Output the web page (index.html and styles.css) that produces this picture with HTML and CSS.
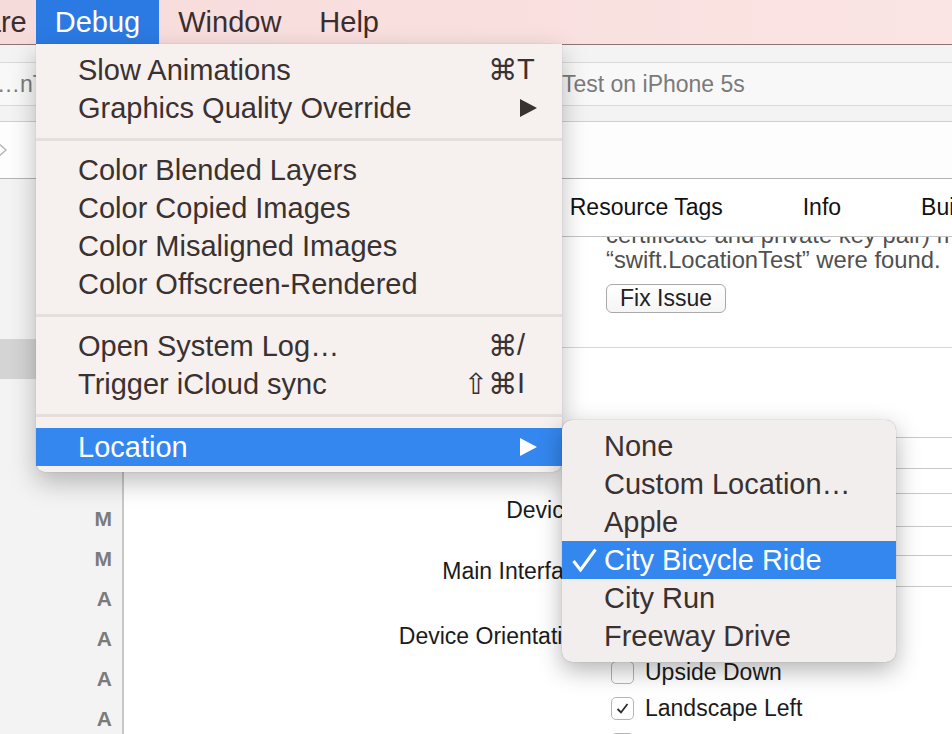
FILE: index.html
```html
<!DOCTYPE html>
<html>
<head>
<meta charset="utf-8">
<title>iOS Simulator – Debug menu</title>
<link rel="stylesheet" href="styles.css">
</head>
<body>
<div class="screen">
  <header class="menubar">
    <span class="mb-item mb-first">Hardware</span>
    <span class="mb-item mb-active">Debug</span>
    <span class="mb-item">Window</span>
    <span class="mb-item">Help</span>
  </header>

  <div class="toolbar">
    <div class="activity">
      <span class="scheme">…nT</span>
      <span class="status">Test on iPhone 5s</span>
    </div>
  </div>

  <div class="jumpbar">
    <svg class="chev" width="10" height="18" viewBox="0 0 10 18"><polyline points="-2,2 6,9 -2,16" fill="none" stroke="#b9b9b9" stroke-width="1.5"/></svg>
  </div>

  <div class="workspace">
    <aside class="navigator">
      <div class="nav-row"></div>
      <div class="nav-row"></div>
      <div class="nav-row"></div>
      <div class="nav-row"></div>
      <div class="nav-row selected"></div>
      <div class="nav-row"></div>
      <div class="nav-row"></div>
      <div class="nav-row"></div>
      <div class="nav-row"><span class="scm">M</span></div>
      <div class="nav-row"><span class="scm">M</span></div>
      <div class="nav-row"><span class="scm">A</span></div>
      <div class="nav-row"><span class="scm">A</span></div>
      <div class="nav-row"><span class="scm">A</span></div>
      <div class="nav-row"><span class="scm">A</span></div>
    </aside>

    <main class="editor">
      <nav class="tabs">
        <span class="tab">General</span>
        <span class="tab">Capabilities</span>
        <span class="tab">Resource Tags</span>
        <span class="tab">Info</span>
        <span class="tab">Build Settings</span>
      </nav>
      <div class="content">
        <section class="issue">
          <p class="issue-text">certificate and private key pair) matching the bundle identifier<br>“swift.LocationTest” were found.</p>
          <button class="btn">Fix Issue</button>
        </section>
        <section class="deploy">
          <h3 class="sec-title">▾ Deployment Info</h3>
          <div class="row r1"><span class="row-label">Deployment Target</span><span class="field">8.1</span></div>
          <div class="row r2"><span class="row-label">Devices</span><span class="field tall">iPhone</span></div>
          <div class="row r3"><span class="row-label">Main Interface</span><span class="field">Main</span></div>
          <div class="row orient">
            <span class="row-label">Device Orientation</span>
            <div class="checks">
              <div class="check-row"><span class="cb"><svg width="15" height="15" viewBox="0 0 15 15"><path d="M2.5 8 L6 11.5 L12.5 3" fill="none" stroke="#2b2b2b" stroke-width="1.8"/></svg></span>Portrait</div>
              <div class="check-row"><span class="cb"></span>Upside Down</div>
              <div class="check-row"><span class="cb"><svg width="15" height="15" viewBox="0 0 15 15"><path d="M2.5 8 L6 11.5 L12.5 3" fill="none" stroke="#2b2b2b" stroke-width="1.8"/></svg></span>Landscape Left</div>
              <div class="check-row"><span class="cb"></span>Landscape Right</div>
            </div>
          </div>
        </section>
      </div>
    </main>
  </div>

  <div class="menu debug-menu">
    <div class="mi"><span class="mi-text">Slow Animations</span><span class="sc"><span class="sc-mod">⌘</span><span class="sc-key">T</span></span></div>
    <div class="mi"><span class="mi-text">Graphics Quality Override</span><svg class="arrow" width="17" height="18" viewBox="0 0 17 18"><polygon points="0,0 17,9 0,18"/></svg></div>
    <div class="sep"></div>
    <div class="mi"><span class="mi-text">Color Blended Layers</span></div>
    <div class="mi"><span class="mi-text">Color Copied Images</span></div>
    <div class="mi"><span class="mi-text">Color Misaligned Images</span></div>
    <div class="mi"><span class="mi-text">Color Offscreen-Rendered</span></div>
    <div class="sep"></div>
    <div class="mi"><span class="mi-text">Open System Log…</span><span class="sc"><span class="sc-mod">⌘</span><span class="sc-key">/</span></span></div>
    <div class="mi"><span class="mi-text">Trigger iCloud sync</span><span class="sc"><span class="sc-mod">⇧⌘</span><span class="sc-key">I</span></span></div>
    <div class="sep sep-tall"></div>
    <div class="mi hl"><span class="mi-text">Location</span><svg class="arrow" width="17" height="18" viewBox="0 0 17 18"><polygon points="0,0 17,9 0,18"/></svg></div>
  </div>

  <div class="menu submenu">
    <div class="si"><span class="check"></span>None</div>
    <div class="si"><span class="check"></span>Custom Location…</div>
    <div class="si"><span class="check"></span>Apple</div>
    <div class="si hl"><span class="check"><svg width="25" height="24" viewBox="0 0 25 24"><polyline points="1.5,13 8.5,22 23.5,1.5" fill="none" stroke="#fff" stroke-width="3"/></svg></span>City Bicycle Ride</div>
    <div class="si"><span class="check"></span>City Run</div>
    <div class="si"><span class="check"></span>Freeway Drive</div>
  </div>
</div>
</body>
</html>
```

FILE: styles.css
```css
* { box-sizing: border-box; margin: 0; padding: 0; }

html, body {
  width: 952px;
  height: 734px;
  overflow: hidden;
  background: #fff;
}

body {
  font-family: "Liberation Sans", Arial, "DejaVu Sans", sans-serif;
}

.screen {
  position: relative;
  width: 952px;
  height: 734px;
  overflow: hidden;
  background: #fff;
}

/* ---------- menu bar ---------- */
.menubar {
  height: 45px;
  display: flex;
  background: linear-gradient(90deg, #f6dbdb 0%, #f9e0df 50%, #fbe4e4 100%);
  border-bottom: 1px solid #8f7273;
  font-size: 29px;
  color: #3a2d2e;
}

.mb-item {
  padding: 0 19px;
  line-height: 44px;
  white-space: nowrap;
}

.mb-first {
  margin-left: -118px;
  padding-right: 9px;
}

.mb-active {
  background: #2b7ae3;
  color: #fff;
}

/* ---------- toolbar ---------- */
.toolbar {
  height: 77px;
  background: #f3f3f3;
  border-bottom: 1px solid #cfcfcf;
  padding-top: 17px;
}

.activity {
  height: 44px;
  margin: 0 -10px;
  background: #f8f8f8;
  border-top: 1px solid #d9d9d9;
  border-bottom: 1px solid #d9d9d9;
  display: flex;
  align-items: center;
  font-size: 23px;
  color: #7a7a7a;
  white-space: nowrap;
}

.scheme {
  width: 572px;
  padding-left: 7px;
}

/* ---------- jump bar ---------- */
.jumpbar {
  height: 57px;
  background: #fdfdfd;
  border-bottom: 1px solid #b3b3b3;
  display: flex;
  align-items: center;
}

.chev {
  display: block;
}

/* ---------- workspace ---------- */
.workspace {
  display: flex;
  height: 555px;
}

.navigator {
  width: 124px;
  flex: none;
  background: #f3f3f3;
  border-right: 2px solid #c8c8c8;
}

.nav-row {
  height: 40px;
  display: flex;
  align-items: center;
  justify-content: flex-end;
  padding-right: 10px;
}

.nav-row.selected {
  background: #d4d4d4;
}

.scm {
  font-weight: bold;
  font-size: 21px;
  color: #7b7b7b;
}

.editor {
  flex: 1;
  min-width: 0;
  background: #fff;
  display: flex;
  flex-direction: column;
  overflow: hidden;
}

.tabs {
  height: 58px;
  flex: none;
  border-bottom: 1px solid #c4c4c4;
  display: flex;
  align-items: center;
  gap: 80px;
  padding-left: 85px;
  font-size: 23px;
  color: #111;
  white-space: nowrap;
}

.content {
  flex: 1;
  overflow: hidden;
}

.issue {
  padding-left: 482px;
  margin-top: -15px;
}

.issue-text {
  font-size: 23.8px;
  line-height: 25px;
  color: #505050;
  white-space: nowrap;
}

.btn {
  display: block;
  margin-top: 12px;
  height: 29px;
  padding: 0 13px;
  font-family: inherit;
  font-size: 23px;
  line-height: 27px;
  color: #222;
  border: 1px solid #a9a9a9;
  border-radius: 6px;
  background: linear-gradient(#ffffff, #f5f5f5);
}

.deploy {
  margin: 34px 0 0 20px;
  border-top: 1px solid #d6d6d6;
}

.sec-title {
  height: 78px;
  line-height: 78px;
  padding-left: 12px;
  font-size: 23px;
  color: #222;
}

.row {
  display: flex;
  align-items: center;
}

.row-label {
  width: 444px;
  flex: none;
  text-align: right;
  font-size: 23px;
  color: #1b1b1b;
  white-space: nowrap;
}

.field {
  margin-left: 18px;
  width: 420px;
  height: 32px;
  flex: none;
  border: 1px solid #c8c8c8;
  background: #fff;
  font-size: 23px;
  line-height: 30px;
  padding-left: 8px;
  color: #222;
}

.field.tall { height: 34px; line-height: 32px; }

.r1 { margin-top: 11px; }
.r2 { margin-top: 24px; }
.r3 { margin-top: 28px; }

.orient {
  margin-top: 31px;
  align-items: flex-start;
}

.orient .row-label {
  line-height: 36px;
}

.checks {
  margin-left: 18px;
}

.check-row {
  height: 36px;
  display: flex;
  align-items: center;
  gap: 11px;
  padding-left: 5px;
  font-size: 23px;
  color: #1b1b1b;
  white-space: nowrap;
}

.cb {
  width: 23px;
  height: 23px;
  border: 1px solid #b4b4b4;
  border-radius: 5px;
  background: #fff;
  display: flex;
  align-items: center;
  justify-content: center;
}

/* ---------- menus ---------- */
.menu {
  position: absolute;
  font-size: 29px;
  color: #3a3131;
  white-space: nowrap;
}

.debug-menu {
  left: 36px;
  top: 44px;
  width: 526px;
  padding: 7px 0 6px;
  background: #f6f0ee;
  border-radius: 0 0 9px 9px;
  box-shadow: 0 10px 26px rgba(0, 0, 0, 0.26), 0 0 1px rgba(0, 0, 0, 0.35);
}

.mi {
  height: 38px;
  display: flex;
  align-items: center;
  padding: 0 25px 0 42px;
}

.mi-text {
  flex: 1;
}

.sc {
  display: flex;
  margin-right: -3px;
}

.sc-key {
  width: 23px;
}

.arrow {
  display: block;
  fill: #3a3131;
}

.sep {
  height: 24px;
  display: flex;
  align-items: center;
}

.sep::before {
  content: "";
  flex: 1;
  height: 3px;
  background: #e5dedc;
}

.sep-tall {
  height: 25px;
}

.mi.hl {
  background: #3487ef;
  color: #fff;
}

.mi.hl .arrow {
  fill: #fff;
}

.submenu {
  left: 562px;
  top: 420px;
  width: 334px;
  padding: 7px 0;
  background: #f2eeed;
  border-radius: 10px;
  box-shadow: 0 8px 24px rgba(0, 0, 0, 0.3), 0 0 1px rgba(0, 0, 0, 0.35);
}

.si {
  height: 38px;
  display: flex;
  align-items: center;
  padding-left: 10px;
}

.check {
  width: 32px;
  flex: none;
  display: flex;
  align-items: center;
}

.si.hl {
  background: #3487ef;
  color: #fff;
}
```
